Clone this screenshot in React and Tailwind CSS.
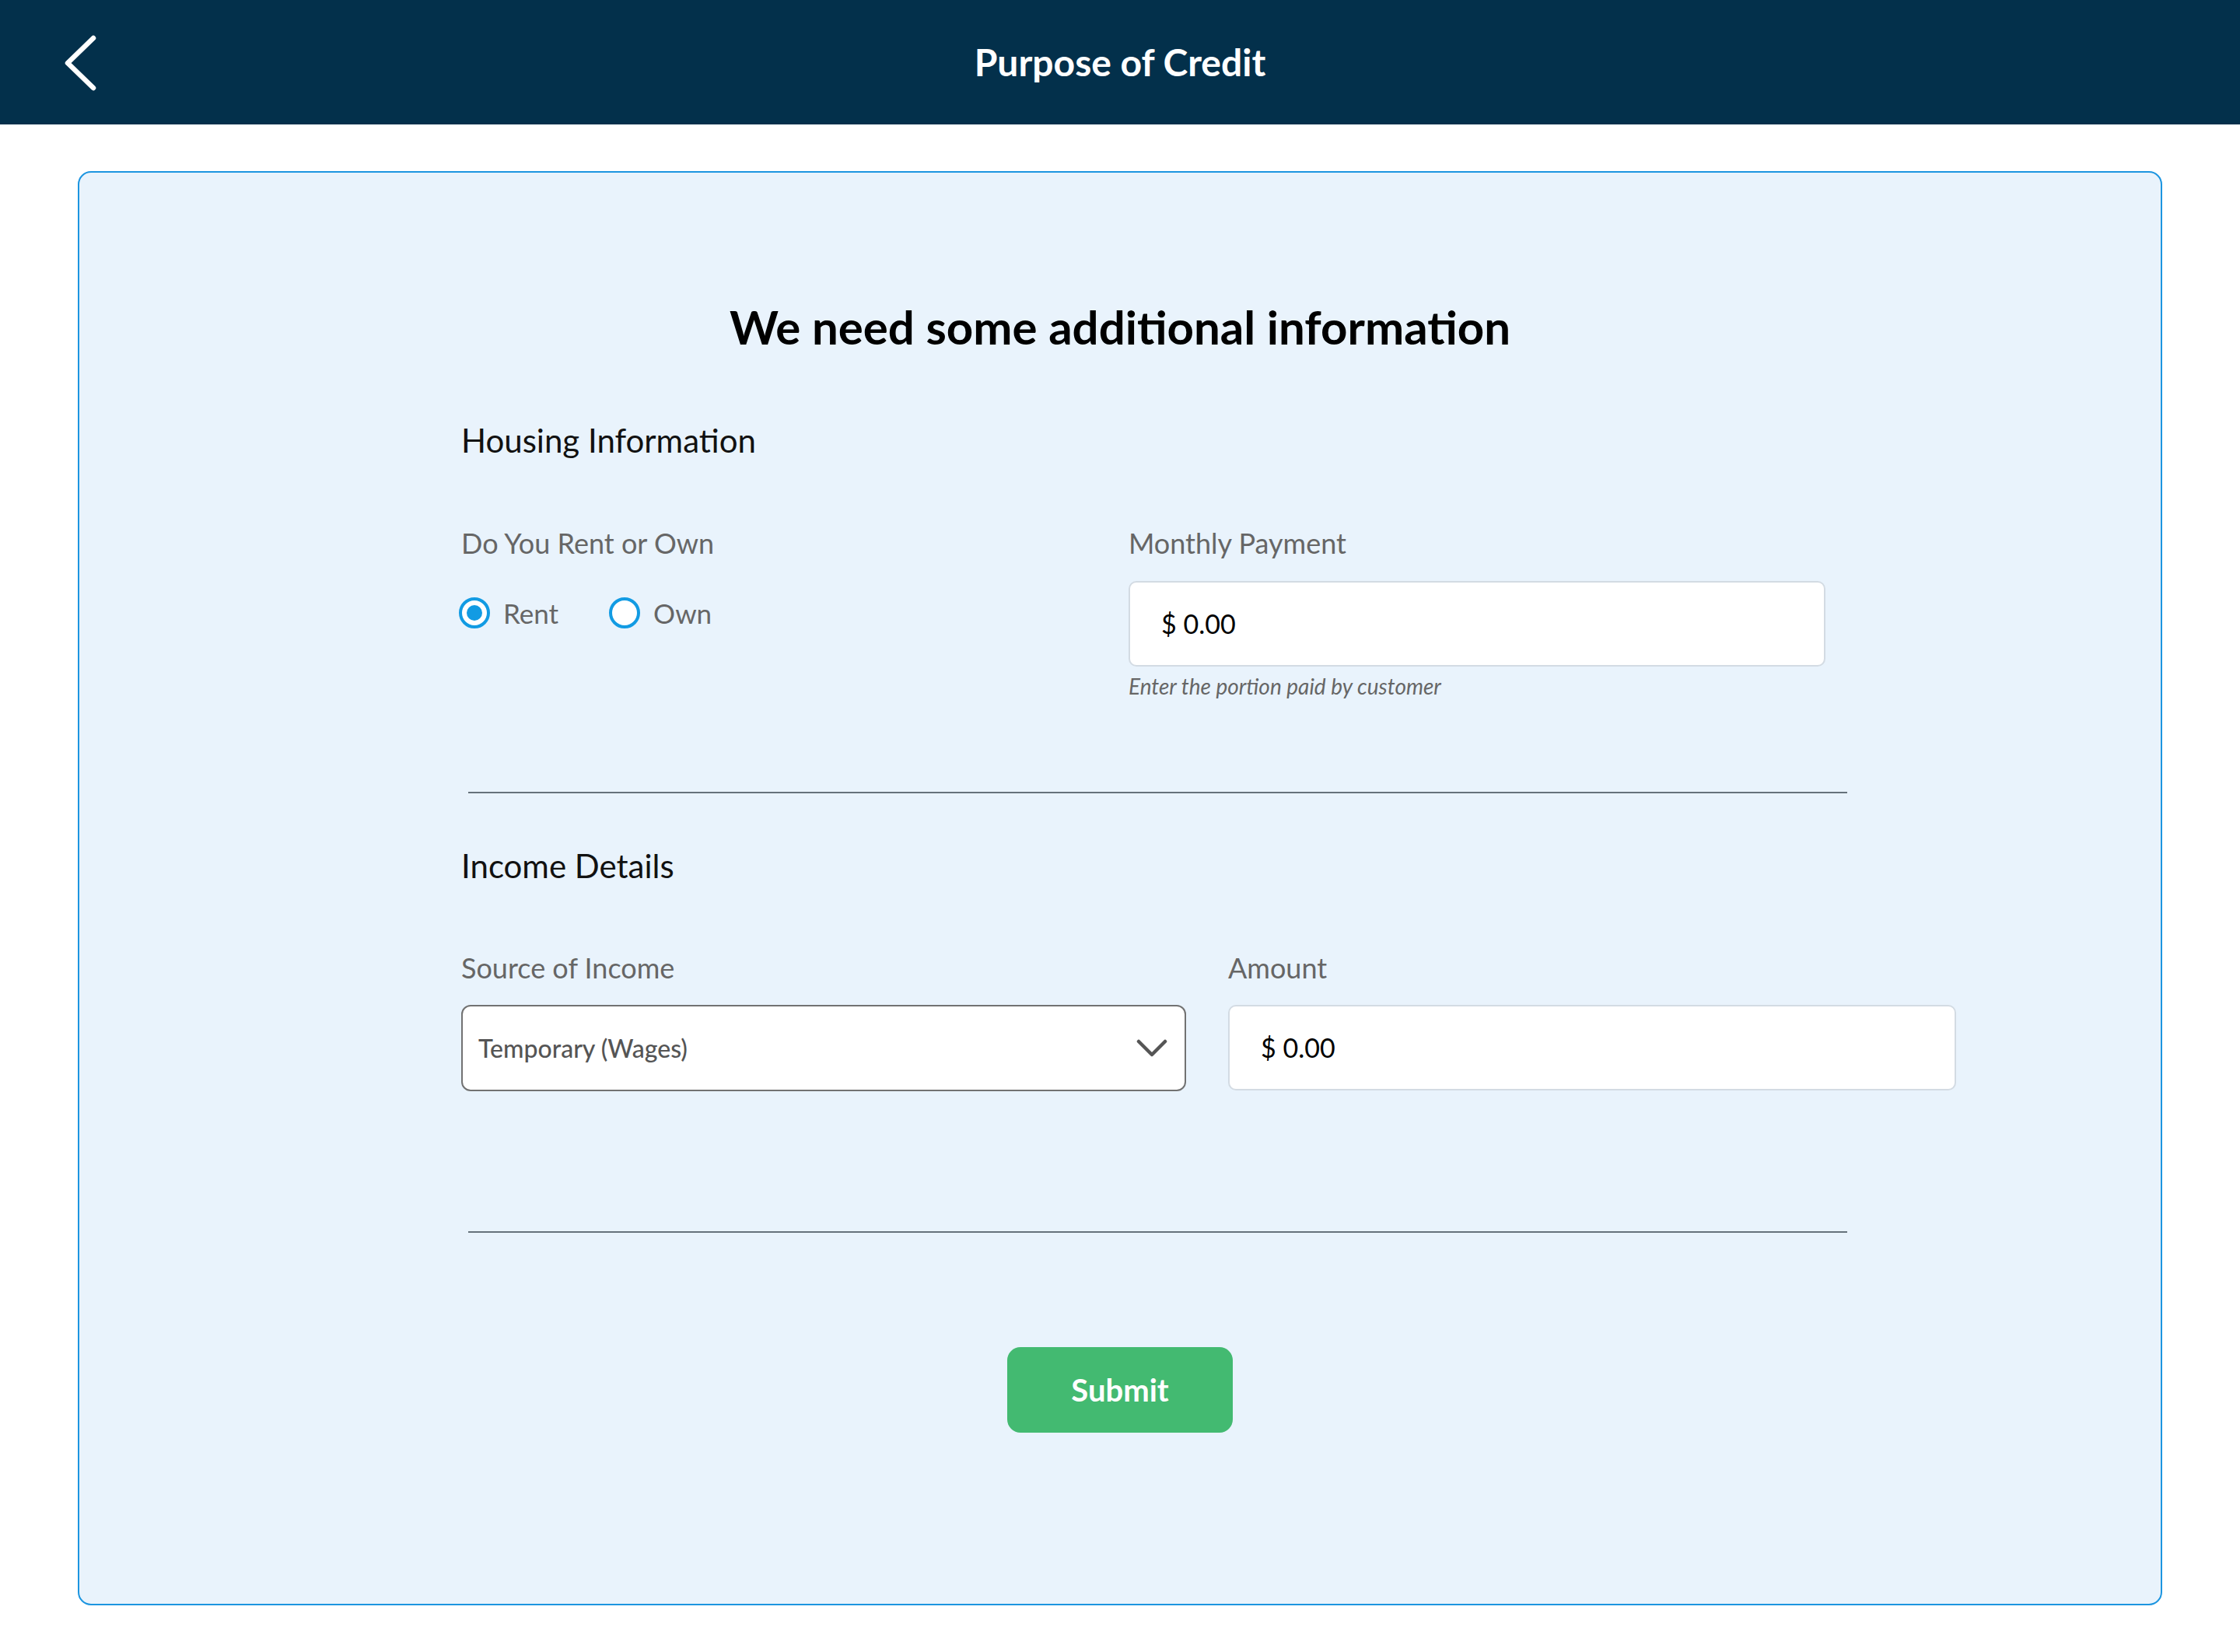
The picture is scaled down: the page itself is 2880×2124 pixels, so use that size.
import { useState } from 'react';

const Radio = ({ checked, label, onClick }) => (
    <button type="button" onClick={onClick} className="flex items-center h-[40px]">
        <span className="w-[40px] h-[40px] rounded-full border-[4px] border-[#129be3] bg-white flex items-center justify-center">
            {checked && <span className="w-[20px] h-[20px] rounded-full bg-[#129be3]" />}
        </span>
        <span className="ml-[17px] text-[35px] leading-none text-[#666]">{label}</span>
    </button>
);

const MoneyInput = ({ width }) => (
    <div className={`${width} h-[110px] bg-white border-2 border-[#d3dbe3] rounded-[10px] flex items-center pl-[40px]`}>
        <span className="text-[34px] leading-none text-black">$ 0.00</span>
    </div>
);

const App = () => {
    const [tenure, setTenure] = useState('rent');

    return (
        <div className="min-h-screen bg-white font-['Lato',sans-serif] pb-[60px]">
            <header className="h-[160px] bg-[#03304b] flex items-center justify-center relative">
                <button className="absolute left-[80px] top-[45px]">
                    <svg width="46" height="72" viewBox="0 0 46 72" fill="none">
                        <polyline points="40,4 7,36 40,68" stroke="white" strokeWidth="6.5" strokeLinecap="round" strokeLinejoin="round" />
                    </svg>
                </button>
                <h1 className="text-[48px] font-bold text-white leading-none">Purpose of Credit</h1>
            </header>

            <div className="mx-[100px] mt-[60px] border-2 border-[#1c95e0] rounded-[17px] bg-[#e9f3fc] pt-[168px] pb-[220px]">
                <h2 className="text-center text-[60px] font-bold leading-none text-black">
                    We need some additional information
                </h2>

                <div className="ml-[491px]">
                    <h3 className="mt-[95px] text-[42px] leading-none text-[#111]">Housing Information</h3>

                    <div className="flex mt-[93px]">
                        <div className="w-[858px]">
                            <p className="text-[36px] leading-none text-[#666]">Do You Rent or Own</p>
                            <div className="flex items-center gap-[65px] mt-[52px] -ml-[3px]">
                                <Radio checked={tenure === 'rent'} label="Rent" onClick={() => setTenure('rent')} />
                                <Radio checked={tenure === 'own'} label="Own" onClick={() => setTenure('own')} />
                            </div>
                        </div>
                        <div>
                            <p className="text-[36px] leading-none text-[#666]">Monthly Payment</p>
                            <div className="mt-[31px]">
                                <MoneyInput width="w-[896px]" />
                            </div>
                            <p className="mt-[11px] text-[28px] italic leading-none text-[#666]">
                                Enter the portion paid by customer
                            </p>
                        </div>
                    </div>

                    <div className="ml-[9px] w-[1773px] h-[2px] bg-[#66727b] mt-[122px]" />

                    <h3 className="mt-[72px] text-[42px] leading-none text-[#111]">Income Details</h3>

                    <div className="flex gap-[54px] mt-[92px]">
                        <div>
                            <p className="text-[36px] leading-none text-[#666]">Source of Income</p>
                            <div className="mt-[30px] w-[932px] h-[111px] bg-white border-2 border-[#727272] rounded-[12px] flex items-center justify-between pl-[20px] pr-[22px]">
                                <span className="text-[32px] font-medium leading-none text-[#555]">Temporary (Wages)</span>
                                <svg width="40" height="26" viewBox="0 0 40 26" fill="none">
                                    <polyline points="3,4 20,21 37,4" stroke="#555" strokeWidth="4.5" strokeLinecap="round" strokeLinejoin="round" />
                                </svg>
                            </div>
                        </div>
                        <div>
                            <p className="text-[36px] leading-none text-[#666]">Amount</p>
                            <div className="mt-[30px]">
                                <MoneyInput width="w-[936px]" />
                            </div>
                        </div>
                    </div>

                    <div className="ml-[9px] w-[1773px] h-[2px] bg-[#66727b] mt-[180px]" />
                </div>

                <div className="flex justify-center mt-[147px]">
                    <button className="w-[290px] h-[110px] rounded-[17px] bg-[#43ba71] text-white text-[40px] font-bold leading-none">
                        Submit
                    </button>
                </div>
            </div>
        </div>
    );
};

export default App;
